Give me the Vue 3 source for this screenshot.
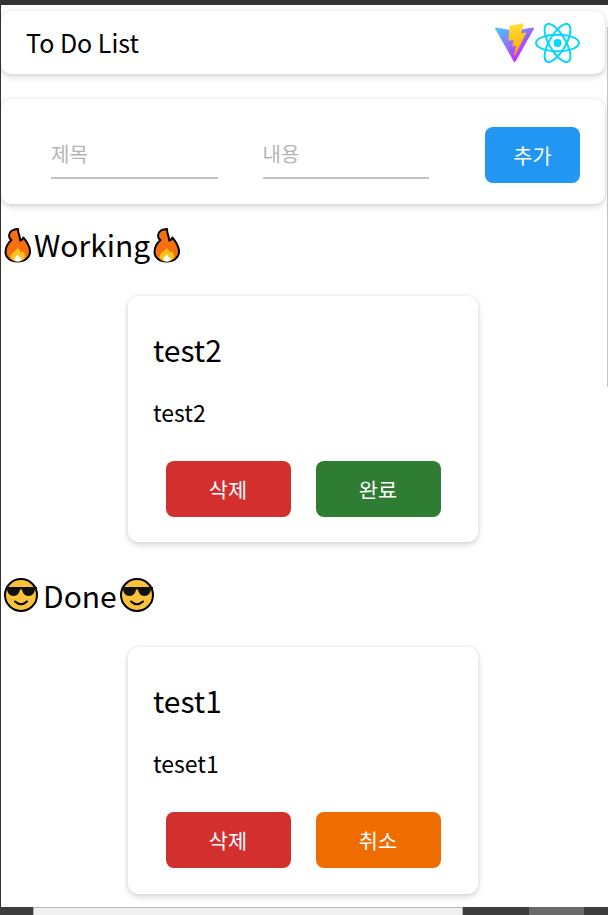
<template>
  <div class="window">
    <div class="top-edge" />
    <div class="page">
      <header class="card header">
        <span class="brand">To Do List</span>
        <div class="logos">
          <svg width="41" height="40" viewBox="0 0 410 404" aria-label="Vite">
            <defs>
              <linearGradient id="va" x1="6" y1="33" x2="235" y2="344" gradientUnits="userSpaceOnUse">
                <stop offset="0" stop-color="#41d1ff" />
                <stop offset="1" stop-color="#bd34fe" />
              </linearGradient>
              <linearGradient id="vb" x1="194" y1="8" x2="236" y2="293" gradientUnits="userSpaceOnUse">
                <stop offset="0" stop-color="#ffea83" />
                <stop offset=".08" stop-color="#ffdd35" />
                <stop offset="1" stop-color="#ffa800" />
              </linearGradient>
            </defs>
            <path fill="url(#va)" d="M399.641 59.5246L215.643 388.545C211.844 395.338 202.084 395.378 198.228 388.618L10.5817 59.5563C6.38087 52.1896 12.6802 43.2665 21.0281 44.7586L205.223 77.6824C206.398 77.8924 207.601 77.8904 208.776 77.6763L389.119 44.8058C397.439 43.2894 403.768 52.1434 399.641 59.5246Z" />
            <path fill="url(#vb)" d="M292.965 1.5744L156.801 28.2552C154.563 28.6937 152.906 30.5903 152.771 32.8664L144.395 174.33C144.198 177.662 147.258 180.248 150.51 179.498L188.42 170.749C191.967 169.931 195.172 173.055 194.443 176.622L183.18 231.775C182.422 235.487 185.907 238.661 189.532 237.56L212.947 230.446C216.577 229.344 220.065 232.527 219.297 236.242L201.398 322.875C200.278 328.294 207.486 331.249 210.492 326.603L212.5 323.5L323.454 102.072C325.312 98.3645 322.108 94.137 318.036 94.9228L279.014 102.454C275.347 103.161 272.227 99.746 273.262 96.1583L298.731 7.86689C299.767 4.27314 296.636 0.855181 292.965 1.5744Z" />
          </svg>
          <svg width="45" height="40" viewBox="-11.5 -10.23 23 20.46" aria-label="React">
            <circle r="2.05" fill="#00d8ff" />
            <g fill="none" stroke="#00d8ff" stroke-width="1">
              <ellipse rx="11" ry="4.2" />
              <ellipse rx="11" ry="4.2" transform="rotate(60)" />
              <ellipse rx="11" ry="4.2" transform="rotate(120)" />
            </g>
          </svg>
        </div>
      </header>

      <form class="card add-form" @submit.prevent>
        <input class="field" placeholder="제목" />
        <input class="field" placeholder="내용" />
        <button class="btn add" type="button">추가</button>
      </form>

      <section v-for="group in groups" :key="group.name" class="group">
        <h2 class="group-title">
          <svg v-if="group.icon === 'fire'" class="emoji fire" viewBox="0 0 31 38">
            <path d="M15 4C10 4 6 6.500 6 10.500c0 2 1 3.500 2.500 4.500C5 18 2.500 22 2.500 27c0 6 5 9.500 12 9.500S27 33 27 26.500c0-6-3.500-10-6.500-14-1 2-2 3-3.500 3 .5-4-2-6-2-11.500Z" fill="#f7700f" stroke="#000" stroke-width="2" stroke-linejoin="round" />
            <path d="M14.500 23c-1 3-7 5-7 9 0 2.500 3 4.500 7 4.500s7.500-1.500 7.500-5c0-2-1-3.500-2.500-5.500-.5 1-1 1.500-2 1.500 0-2-1.500-3.500-3-4.500Z" fill="#ffc21a" />
            <path d="M14.500 29.500c-.5 1.500-3 2.500-3 4.500 0 1.500 1.500 2.500 3.500 2.500s3.500-1 3.500-2.500-1-2-2.500-2c0-1-.5-2-1.500-2.500Z" fill="#fff" />
          </svg>
          <svg v-else class="emoji cool" viewBox="0 0 36 36">
            <circle cx="18" cy="18" r="16" fill="#fbc33b" stroke="#000" stroke-width="2" />
            <path d="M3 10h31v2h-2c-.5 4-2.500 7-6.500 7s-6-3-6.500-6.500h-2C16.500 16 14.500 19 10.500 19S4.500 16 4 12H3Z" fill="#111" />
            <path d="M12 24.500Q18 30 24 24.500" fill="none" stroke="#000" stroke-width="2" stroke-linecap="round" />
          </svg>
          <span class="group-name">{{ group.name }}</span>
          <svg v-if="group.icon === 'fire'" class="emoji fire" viewBox="0 0 31 38">
            <path d="M15 4C10 4 6 6.500 6 10.500c0 2 1 3.500 2.500 4.500C5 18 2.500 22 2.500 27c0 6 5 9.500 12 9.500S27 33 27 26.500c0-6-3.500-10-6.500-14-1 2-2 3-3.500 3 .5-4-2-6-2-11.500Z" fill="#f7700f" stroke="#000" stroke-width="2" stroke-linejoin="round" />
            <path d="M14.500 23c-1 3-7 5-7 9 0 2.500 3 4.500 7 4.500s7.500-1.500 7.500-5c0-2-1-3.500-2.500-5.500-.5 1-1 1.500-2 1.500 0-2-1.500-3.500-3-4.500Z" fill="#ffc21a" />
            <path d="M14.500 29.500c-.5 1.500-3 2.500-3 4.500 0 1.500 1.500 2.500 3.500 2.500s3.500-1 3.500-2.500-1-2-2.500-2c0-1-.5-2-1.500-2.500Z" fill="#fff" />
          </svg>
          <svg v-else class="emoji cool" viewBox="0 0 36 36">
            <circle cx="18" cy="18" r="16" fill="#fbc33b" stroke="#000" stroke-width="2" />
            <path d="M3 10h31v2h-2c-.5 4-2.500 7-6.500 7s-6-3-6.500-6.500h-2C16.500 16 14.500 19 10.500 19S4.500 16 4 12H3Z" fill="#111" />
            <path d="M12 24.500Q18 30 24 24.500" fill="none" stroke="#000" stroke-width="2" stroke-linecap="round" />
          </svg>
        </h2>
        <article class="card todo">
          <h3 class="todo-title">{{ group.title }}</h3>
          <p class="todo-body">{{ group.body }}</p>
          <div class="todo-actions">
            <button class="btn danger" type="button">삭제</button>
            <button class="btn" :class="group.actionClass" type="button">{{ group.action }}</button>
          </div>
        </article>
      </section>
      <div class="scroll-thumb" />
    </div>
    <div class="bottom-edge">
      <div class="behind-panel" />
      <div class="behind-grey" />
    </div>
  </div>
</template>

<script setup>
const groups = [
  { name: 'Working', icon: 'fire', title: 'test2', body: 'test2', action: '완료', actionClass: 'success' },
  { name: 'Done', icon: 'cool', title: 'test1', body: 'teset1', action: '취소', actionClass: 'warn' },
]
</script>

<style>
html, body { margin: 0; background: #fff; overflow: hidden; }
</style>

<style scoped>
.window {
  width: 608px;
  height: 915px;
  display: flex;
  flex-direction: column;
  overflow: hidden;
  font-family: "Noto Sans CJK KR", "Noto Sans", sans-serif;
  color: #000;
}

.top-edge {
  flex: none;
  height: 5px;
  background: #333;
}

.page {
  position: relative;
  flex: 1;
  min-height: 0;
  box-sizing: border-box;
  padding: 6px 3px 0 0;
  border-left: 1px solid #333;
  background: #fff;
  overflow: hidden;
}

.card {
  background: #fff;
  border-radius: 10px;
  box-shadow: 0 3px 6px rgba(0, 0, 0, .14), 0 0 4px rgba(0, 0, 0, .09);
}

.header {
  height: 63px;
  box-sizing: border-box;
  display: flex;
  align-items: center;
  justify-content: space-between;
  padding: 0 25px;
}

.brand {
  font-size: 25px;
  line-height: 1;
}

.logos {
  display: flex;
  align-items: center;
}

.add-form {
  height: 105px;
  margin-top: 25px;
  box-sizing: border-box;
  display: flex;
  align-items: center;
  padding: 6px 25px 0 50px;
}

.field {
  width: 166.5px;
  height: 44px;
  box-sizing: border-box;
  margin-top: 4px;
  margin-right: 45px;
  padding: 0 0 4px;
  border: 0;
  border-bottom: 2px solid #c0c0c0;
  outline: 0;
  font: inherit;
  font-size: 20px;
  background: transparent;
}

.field::placeholder { color: #b4b4b4; opacity: 1; }

.btn {
  border: 0;
  border-radius: 8px;
  color: #fff;
  font: inherit;
  font-size: 20.8px;
  padding: 0;
}

.add {
  width: 95px;
  height: 56px;
  margin-left: auto;
  background: #2196f3;
}

.group-title {
  display: flex;
  align-items: center;
  height: 40px;
  margin: 20px 0 32px 2px;
  font-size: 30px;
  font-weight: 400;
  line-height: 40px;
}

.group + .group .group-title { margin-top: 33px; }

.emoji { flex: none; display: block; }
.fire { width: 31px; height: 38px; }
.cool { width: 36px; height: 36px; }

.group-name { margin-right: 2px; }
.cool + .group-name { margin: 0 2px 0 4px; }

.todo {
  width: 350px;
  height: 246px;
  margin-left: 127px;
  box-sizing: border-box;
  padding: 32px 25px 0;
}

.group + .group .todo { height: 247px; }

.todo-title {
  margin: 0;
  font-size: 30px;
  font-weight: 400;
  line-height: 42px;
}

.todo-body {
  margin: 26px 0 0;
  font-size: 23px;
  line-height: 32px;
}

.todo-actions {
  display: flex;
  justify-content: center;
  gap: 25px;
  margin-top: 33px;
}

.todo-actions .btn {
  width: 125px;
  height: 56px;
}

.danger { background: #d32f2f; }
.success { background: #2e7d32; }
.warn { background: #ef6c00; }

.scroll-thumb {
  position: absolute;
  top: 22px;
  right: 0;
  width: 1px;
  height: 360px;
  background: #c4c4c4;
}

.bottom-edge {
  flex: none;
  position: relative;
  height: 8px;
  background: #3d3d3d;
}

.behind-panel {
  position: absolute;
  left: 33px;
  top: 0;
  width: 430px;
  height: 8px;
  box-sizing: border-box;
  border: 1px solid #b5b5b5;
  border-bottom: 0;
  background: #f0f0f0;
}

.behind-grey {
  position: absolute;
  left: 529px;
  top: 0;
  width: 55px;
  height: 8px;
  background: #6a6a6a;
}
</style>
